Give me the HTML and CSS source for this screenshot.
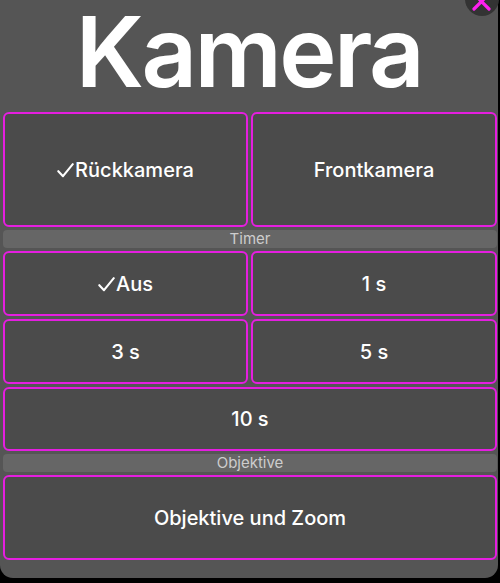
FILE: index.html
```html
<!DOCTYPE html>
<html lang="de">
<head>
<meta charset="utf-8">
<link rel="stylesheet" href="styles.css">
</head>
<body>
<div class="panel">
  <div class="title-row">
    <h1 class="title">Kamera</h1>
    <button class="close" aria-label="Schließen">
      <svg width="34" height="34" viewBox="0 0 34 34"><path d="M9 12 L24 27 M24 12 L9 27" stroke="#ff1ff0" stroke-width="3.2" stroke-linecap="round" fill="none"/></svg>
    </button>
  </div>
  <div class="grid two">
    <button class="opt tall"><svg class="chk" width="17" height="15" viewBox="0 0 17 15"><path d="M1.3 8.2 L6 13.2 L15.8 1.2" stroke="#fff" stroke-width="2.1" stroke-linecap="round" stroke-linejoin="round" fill="none"/></svg>Rückkamera</button>
    <button class="opt tall">Frontkamera</button>
  </div>
  <div class="section">Timer</div>
  <div class="grid two">
    <button class="opt"><svg class="chk" width="17" height="15" viewBox="0 0 17 15"><path d="M1.3 8.2 L6 13.2 L15.8 1.2" stroke="#fff" stroke-width="2.1" stroke-linecap="round" stroke-linejoin="round" fill="none"/></svg>Aus</button>
    <button class="opt">1 s</button>
    <button class="opt">3 s</button>
    <button class="opt">5 s</button>
    <button class="opt wide">10 s</button>
  </div>
  <div class="section">Objektive</div>
  <div class="grid">
    <button class="opt lens">Objektive und Zoom</button>
  </div>
</div>
</body>
</html>
```
FILE: styles.css
```css
html, body {
  margin: 0;
  padding: 0;
  background: #000;
}
body {
  width: 500px;
  height: 583px;
  overflow: hidden;
  font-family: Inter, "Noto Sans", sans-serif;
}
.panel {
  width: 498px;
  height: 578px;
  box-sizing: border-box;
  background: #555555;
  border-radius: 0 0 13px 13px;
  padding: 0 1px 17px 3px;
  display: flex;
  flex-direction: column;
  gap: 3px;
}
.title-row {
  height: 109px;
  position: relative;
  display: flex;
  justify-content: center;
  align-items: flex-start;
}
.title {
  margin: 0;
  font-size: 97px;
  font-weight: 600;
  color: #fff;
  letter-spacing: -2.6px;
  line-height: 1;
  padding-top: 3px;
  padding-right: 2px;
}
.close {
  position: absolute;
  left: 462px;
  top: -18px;
  width: 34px;
  height: 34px;
  border-radius: 50%;
  border: none;
  padding: 0;
  background: #333333;
}
.close svg { display: block; }
.grid {
  display: grid;
  grid-template-columns: 1fr;
  gap: 3px;
}
.grid.two {
  grid-template-columns: 245px 246px;
  column-gap: 3px;
  row-gap: 3px;
}
.opt {
  height: 65px;
  box-sizing: border-box;
  border: 2px solid #e51ee0;
  border-radius: 6px;
  background: #4b4b4b;
  color: #fff;
  font-family: Inter, "Noto Sans", sans-serif;
  font-size: 20px;
  font-weight: 500;
  padding: 0;
  margin: 0;
}
.chk {
  display: inline-block;
  vertical-align: -1px;
  margin-right: 1px;
}
.opt.tall { height: 115px; }
.opt.wide { grid-column: 1 / span 2; height: 64px; }
.opt.lens { height: 85px; }
.section {
  height: 18px;
  background: #666666;
  border-radius: 4px;
  color: #cdcdcd;
  font-size: 15px;
  line-height: 18px;
  text-align: center;
}
```
